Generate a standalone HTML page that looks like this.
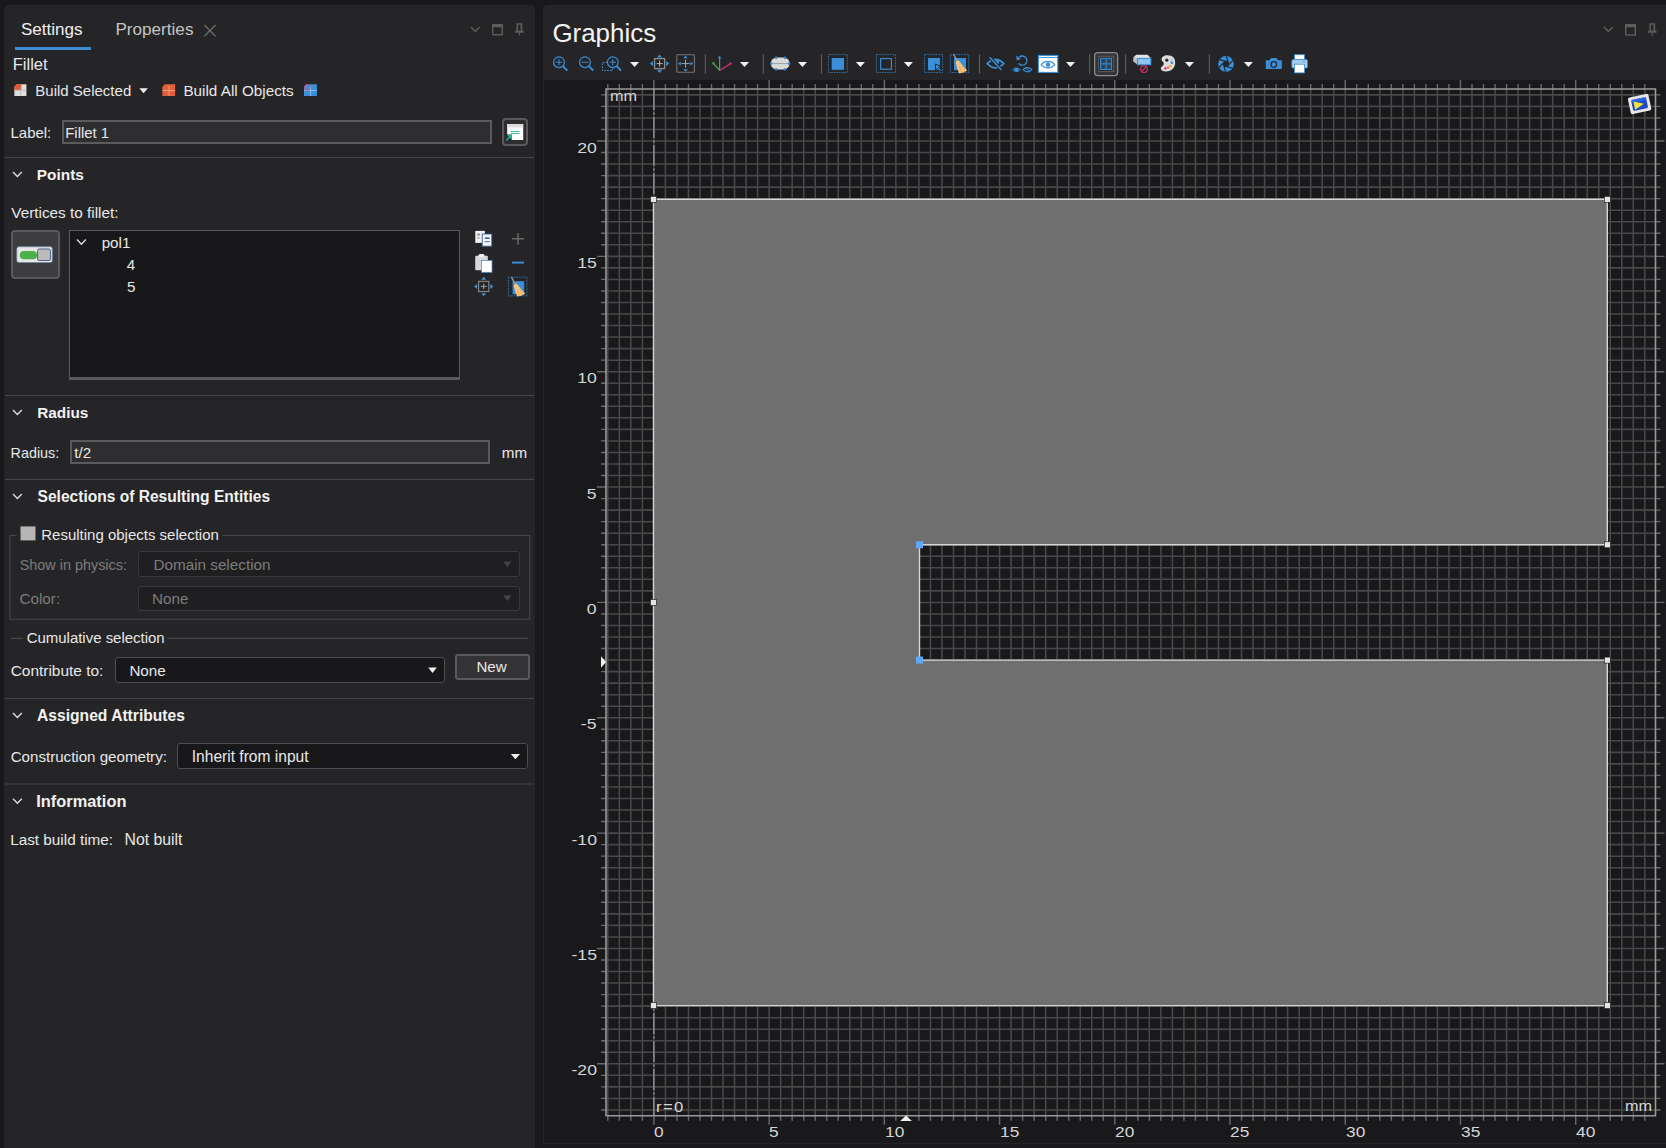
<!DOCTYPE html>
<html><head><meta charset="utf-8"><style>
html,body{margin:0;padding:0;width:1666px;height:1148px;overflow:hidden;background:#19191b;font-family:"Liberation Sans", sans-serif;}
.t{position:absolute;white-space:nowrap;}
.al{position:absolute;white-space:nowrap;font-size:15.2px;line-height:15.2px;color:#d6d6d6;}
.abs{position:absolute;box-sizing:border-box;}
</style></head><body>
<div class="abs" style="left:4px;top:5px;width:531px;height:1143px;background:#252527;border-radius:5px 5px 0 0"></div>
<div class="abs" style="left:543px;top:5px;width:1123px;height:1139px;background:#252527;border-radius:5px 0 0 0"></div>
<div class="abs" style="left:544px;top:80px;width:1122px;height:1063px;background:#19191b"></div>
<svg class="abs" style="left:0;top:0" width="1666" height="1148" viewBox="0 0 1666 1148">
<path d="M607.81 89V1115.7M619.33 89V1115.7M630.86 89V1115.7M642.38 89V1115.7M653.9 89V1115.7M665.42 89V1115.7M676.94 89V1115.7M688.47 89V1115.7M699.99 89V1115.7M711.51 89V1115.7M723.03 89V1115.7M734.56 89V1115.7M746.08 89V1115.7M757.6 89V1115.7M769.12 89V1115.7M780.65 89V1115.7M792.17 89V1115.7M803.69 89V1115.7M815.21 89V1115.7M826.74 89V1115.7M838.26 89V1115.7M849.78 89V1115.7M861.31 89V1115.7M872.83 89V1115.7M884.35 89V1115.7M895.87 89V1115.7M907.39 89V1115.7M918.92 89V1115.7M930.44 89V1115.7M941.96 89V1115.7M953.49 89V1115.7M965.01 89V1115.7M976.53 89V1115.7M988.05 89V1115.7M999.58 89V1115.7M1011.1 89V1115.7M1022.62 89V1115.7M1034.14 89V1115.7M1045.66 89V1115.7M1057.19 89V1115.7M1068.71 89V1115.7M1080.23 89V1115.7M1091.76 89V1115.7M1103.28 89V1115.7M1114.8 89V1115.7M1126.32 89V1115.7M1137.85 89V1115.7M1149.37 89V1115.7M1160.89 89V1115.7M1172.41 89V1115.7M1183.93 89V1115.7M1195.46 89V1115.7M1206.98 89V1115.7M1218.5 89V1115.7M1230.03 89V1115.7M1241.55 89V1115.7M1253.07 89V1115.7M1264.59 89V1115.7M1276.12 89V1115.7M1287.64 89V1115.7M1299.16 89V1115.7M1310.68 89V1115.7M1322.2 89V1115.7M1333.73 89V1115.7M1345.25 89V1115.7M1356.77 89V1115.7M1368.3 89V1115.7M1379.82 89V1115.7M1391.34 89V1115.7M1402.86 89V1115.7M1414.38 89V1115.7M1425.91 89V1115.7M1437.43 89V1115.7M1448.95 89V1115.7M1460.47 89V1115.7M1472 89V1115.7M1483.52 89V1115.7M1495.04 89V1115.7M1506.57 89V1115.7M1518.09 89V1115.7M1529.61 89V1115.7M1541.13 89V1115.7M1552.66 89V1115.7M1564.18 89V1115.7M1575.7 89V1115.7M1587.22 89V1115.7M1598.74 89V1115.7M1610.27 89V1115.7M1621.79 89V1115.7M1633.31 89V1115.7M1644.84 89V1115.7M606 94.86H1655.5M606 106.39H1655.5M606 117.93H1655.5M606 129.46H1655.5M606 141H1655.5M606 152.53H1655.5M606 164.07H1655.5M606 175.6H1655.5M606 187.14H1655.5M606 198.67H1655.5M606 210.21H1655.5M606 221.74H1655.5M606 233.28H1655.5M606 244.81H1655.5M606 256.35H1655.5M606 267.88H1655.5M606 279.42H1655.5M606 290.95H1655.5M606 302.49H1655.5M606 314.02H1655.5M606 325.56H1655.5M606 337.09H1655.5M606 348.63H1655.5M606 360.16H1655.5M606 371.7H1655.5M606 383.24H1655.5M606 394.77H1655.5M606 406.3H1655.5M606 417.84H1655.5M606 429.38H1655.5M606 440.91H1655.5M606 452.44H1655.5M606 463.98H1655.5M606 475.51H1655.5M606 487.05H1655.5M606 498.58H1655.5M606 510.12H1655.5M606 521.65H1655.5M606 533.19H1655.5M606 544.73H1655.5M606 556.26H1655.5M606 567.79H1655.5M606 579.33H1655.5M606 590.87H1655.5M606 602.4H1655.5M606 613.93H1655.5M606 625.47H1655.5M606 637H1655.5M606 648.54H1655.5M606 660.07H1655.5M606 671.61H1655.5M606 683.14H1655.5M606 694.68H1655.5M606 706.21H1655.5M606 717.75H1655.5M606 729.28H1655.5M606 740.82H1655.5M606 752.36H1655.5M606 763.89H1655.5M606 775.42H1655.5M606 786.96H1655.5M606 798.5H1655.5M606 810.03H1655.5M606 821.56H1655.5M606 833.1H1655.5M606 844.63H1655.5M606 856.17H1655.5M606 867.7H1655.5M606 879.24H1655.5M606 890.77H1655.5M606 902.31H1655.5M606 913.85H1655.5M606 925.38H1655.5M606 936.91H1655.5M606 948.45H1655.5M606 959.98H1655.5M606 971.52H1655.5M606 983.06H1655.5M606 994.59H1655.5M606 1006.12H1655.5M606 1017.66H1655.5M606 1029.19H1655.5M606 1040.73H1655.5M606 1052.26H1655.5M606 1063.8H1655.5M606 1075.34H1655.5M606 1086.87H1655.5M606 1098.4H1655.5M606 1109.94H1655.5" stroke="#48484a" stroke-width="1.55" fill="none"/>
<path d="M607.81 84V89M607.81 1115.7V1120.7M619.33 84V89M619.33 1115.7V1120.7M630.86 84V89M630.86 1115.7V1120.7M642.38 84V89M642.38 1115.7V1120.7M653.9 80V89M653.9 1115.7V1124.7M665.42 84V89M665.42 1115.7V1120.7M676.94 84V89M676.94 1115.7V1120.7M688.47 84V89M688.47 1115.7V1120.7M699.99 84V89M699.99 1115.7V1120.7M711.51 84V89M711.51 1115.7V1120.7M723.03 84V89M723.03 1115.7V1120.7M734.56 84V89M734.56 1115.7V1120.7M746.08 84V89M746.08 1115.7V1120.7M757.6 84V89M757.6 1115.7V1120.7M769.12 80V89M769.12 1115.7V1124.7M780.65 84V89M780.65 1115.7V1120.7M792.17 84V89M792.17 1115.7V1120.7M803.69 84V89M803.69 1115.7V1120.7M815.21 84V89M815.21 1115.7V1120.7M826.74 84V89M826.74 1115.7V1120.7M838.26 84V89M838.26 1115.7V1120.7M849.78 84V89M849.78 1115.7V1120.7M861.31 84V89M861.31 1115.7V1120.7M872.83 84V89M872.83 1115.7V1120.7M884.35 80V89M884.35 1115.7V1124.7M895.87 84V89M895.87 1115.7V1120.7M907.39 84V89M907.39 1115.7V1120.7M918.92 84V89M918.92 1115.7V1120.7M930.44 84V89M930.44 1115.7V1120.7M941.96 84V89M941.96 1115.7V1120.7M953.49 84V89M953.49 1115.7V1120.7M965.01 84V89M965.01 1115.7V1120.7M976.53 84V89M976.53 1115.7V1120.7M988.05 84V89M988.05 1115.7V1120.7M999.58 80V89M999.58 1115.7V1124.7M1011.1 84V89M1011.1 1115.7V1120.7M1022.62 84V89M1022.62 1115.7V1120.7M1034.14 84V89M1034.14 1115.7V1120.7M1045.66 84V89M1045.66 1115.7V1120.7M1057.19 84V89M1057.19 1115.7V1120.7M1068.71 84V89M1068.71 1115.7V1120.7M1080.23 84V89M1080.23 1115.7V1120.7M1091.76 84V89M1091.76 1115.7V1120.7M1103.28 84V89M1103.28 1115.7V1120.7M1114.8 80V89M1114.8 1115.7V1124.7M1126.32 84V89M1126.32 1115.7V1120.7M1137.85 84V89M1137.85 1115.7V1120.7M1149.37 84V89M1149.37 1115.7V1120.7M1160.89 84V89M1160.89 1115.7V1120.7M1172.41 84V89M1172.41 1115.7V1120.7M1183.93 84V89M1183.93 1115.7V1120.7M1195.46 84V89M1195.46 1115.7V1120.7M1206.98 84V89M1206.98 1115.7V1120.7M1218.5 84V89M1218.5 1115.7V1120.7M1230.03 80V89M1230.03 1115.7V1124.7M1241.55 84V89M1241.55 1115.7V1120.7M1253.07 84V89M1253.07 1115.7V1120.7M1264.59 84V89M1264.59 1115.7V1120.7M1276.12 84V89M1276.12 1115.7V1120.7M1287.64 84V89M1287.64 1115.7V1120.7M1299.16 84V89M1299.16 1115.7V1120.7M1310.68 84V89M1310.68 1115.7V1120.7M1322.2 84V89M1322.2 1115.7V1120.7M1333.73 84V89M1333.73 1115.7V1120.7M1345.25 80V89M1345.25 1115.7V1124.7M1356.77 84V89M1356.77 1115.7V1120.7M1368.3 84V89M1368.3 1115.7V1120.7M1379.82 84V89M1379.82 1115.7V1120.7M1391.34 84V89M1391.34 1115.7V1120.7M1402.86 84V89M1402.86 1115.7V1120.7M1414.38 84V89M1414.38 1115.7V1120.7M1425.91 84V89M1425.91 1115.7V1120.7M1437.43 84V89M1437.43 1115.7V1120.7M1448.95 84V89M1448.95 1115.7V1120.7M1460.47 80V89M1460.47 1115.7V1124.7M1472 84V89M1472 1115.7V1120.7M1483.52 84V89M1483.52 1115.7V1120.7M1495.04 84V89M1495.04 1115.7V1120.7M1506.57 84V89M1506.57 1115.7V1120.7M1518.09 84V89M1518.09 1115.7V1120.7M1529.61 84V89M1529.61 1115.7V1120.7M1541.13 84V89M1541.13 1115.7V1120.7M1552.66 84V89M1552.66 1115.7V1120.7M1564.18 84V89M1564.18 1115.7V1120.7M1575.7 80V89M1575.7 1115.7V1124.7M1587.22 84V89M1587.22 1115.7V1120.7M1598.74 84V89M1598.74 1115.7V1120.7M1610.27 84V89M1610.27 1115.7V1120.7M1621.79 84V89M1621.79 1115.7V1120.7M1633.31 84V89M1633.31 1115.7V1120.7M1644.84 84V89M1644.84 1115.7V1120.7M601 94.86H606M1655.5 94.86H1660.5M601 106.39H606M1655.5 106.39H1660.5M601 117.93H606M1655.5 117.93H1660.5M601 129.46H606M1655.5 129.46H1660.5M597 141H606M1655.5 141H1664.5M601 152.53H606M1655.5 152.53H1660.5M601 164.07H606M1655.5 164.07H1660.5M601 175.6H606M1655.5 175.6H1660.5M601 187.14H606M1655.5 187.14H1660.5M601 198.67H606M1655.5 198.67H1660.5M601 210.21H606M1655.5 210.21H1660.5M601 221.74H606M1655.5 221.74H1660.5M601 233.28H606M1655.5 233.28H1660.5M601 244.81H606M1655.5 244.81H1660.5M597 256.35H606M1655.5 256.35H1664.5M601 267.88H606M1655.5 267.88H1660.5M601 279.42H606M1655.5 279.42H1660.5M601 290.95H606M1655.5 290.95H1660.5M601 302.49H606M1655.5 302.49H1660.5M601 314.02H606M1655.5 314.02H1660.5M601 325.56H606M1655.5 325.56H1660.5M601 337.09H606M1655.5 337.09H1660.5M601 348.63H606M1655.5 348.63H1660.5M601 360.16H606M1655.5 360.16H1660.5M597 371.7H606M1655.5 371.7H1664.5M601 383.24H606M1655.5 383.24H1660.5M601 394.77H606M1655.5 394.77H1660.5M601 406.3H606M1655.5 406.3H1660.5M601 417.84H606M1655.5 417.84H1660.5M601 429.38H606M1655.5 429.38H1660.5M601 440.91H606M1655.5 440.91H1660.5M601 452.44H606M1655.5 452.44H1660.5M601 463.98H606M1655.5 463.98H1660.5M601 475.51H606M1655.5 475.51H1660.5M597 487.05H606M1655.5 487.05H1664.5M601 498.58H606M1655.5 498.58H1660.5M601 510.12H606M1655.5 510.12H1660.5M601 521.65H606M1655.5 521.65H1660.5M601 533.19H606M1655.5 533.19H1660.5M601 544.73H606M1655.5 544.73H1660.5M601 556.26H606M1655.5 556.26H1660.5M601 567.79H606M1655.5 567.79H1660.5M601 579.33H606M1655.5 579.33H1660.5M601 590.87H606M1655.5 590.87H1660.5M597 602.4H606M1655.5 602.4H1664.5M601 613.93H606M1655.5 613.93H1660.5M601 625.47H606M1655.5 625.47H1660.5M601 637H606M1655.5 637H1660.5M601 648.54H606M1655.5 648.54H1660.5M601 660.07H606M1655.5 660.07H1660.5M601 671.61H606M1655.5 671.61H1660.5M601 683.14H606M1655.5 683.14H1660.5M601 694.68H606M1655.5 694.68H1660.5M601 706.21H606M1655.5 706.21H1660.5M597 717.75H606M1655.5 717.75H1664.5M601 729.28H606M1655.5 729.28H1660.5M601 740.82H606M1655.5 740.82H1660.5M601 752.36H606M1655.5 752.36H1660.5M601 763.89H606M1655.5 763.89H1660.5M601 775.42H606M1655.5 775.42H1660.5M601 786.96H606M1655.5 786.96H1660.5M601 798.5H606M1655.5 798.5H1660.5M601 810.03H606M1655.5 810.03H1660.5M601 821.56H606M1655.5 821.56H1660.5M597 833.1H606M1655.5 833.1H1664.5M601 844.63H606M1655.5 844.63H1660.5M601 856.17H606M1655.5 856.17H1660.5M601 867.7H606M1655.5 867.7H1660.5M601 879.24H606M1655.5 879.24H1660.5M601 890.77H606M1655.5 890.77H1660.5M601 902.31H606M1655.5 902.31H1660.5M601 913.85H606M1655.5 913.85H1660.5M601 925.38H606M1655.5 925.38H1660.5M601 936.91H606M1655.5 936.91H1660.5M597 948.45H606M1655.5 948.45H1664.5M601 959.98H606M1655.5 959.98H1660.5M601 971.52H606M1655.5 971.52H1660.5M601 983.06H606M1655.5 983.06H1660.5M601 994.59H606M1655.5 994.59H1660.5M601 1006.12H606M1655.5 1006.12H1660.5M601 1017.66H606M1655.5 1017.66H1660.5M601 1029.19H606M1655.5 1029.19H1660.5M601 1040.73H606M1655.5 1040.73H1660.5M601 1052.26H606M1655.5 1052.26H1660.5M597 1063.8H606M1655.5 1063.8H1664.5M601 1075.34H606M1655.5 1075.34H1660.5M601 1086.87H606M1655.5 1086.87H1660.5M601 1098.4H606M1655.5 1098.4H1660.5M601 1109.94H606M1655.5 1109.94H1660.5" stroke="#6a6a6c" stroke-width="1.4" fill="none"/>
<path d="M653.9 89V1115.7" stroke="#8e8e90" stroke-width="1.5" fill="none" stroke-dasharray="21 2.5 2 2.5"/>
<path d="M606 1115.7V89H1655.5V1115.7Z" stroke="#9a9a9c" stroke-width="1.6" fill="none"/>
<path d="M653.5 199.3H1607.3V544.8H919.5V660.1H1607.3V1005.6H653.5Z" fill="#6f6f6f" stroke="#d6d6d6" stroke-width="1.4"/>
<rect x="650.5" y="196.3" width="6" height="6" fill="#e4e4e4" stroke="#111" stroke-width="0.6"/>
<rect x="1604.3" y="196.3" width="6" height="6" fill="#e4e4e4" stroke="#111" stroke-width="0.6"/>
<rect x="1604.3" y="541.8" width="6" height="6" fill="#e4e4e4" stroke="#111" stroke-width="0.6"/>
<rect x="1604.3" y="657.1" width="6" height="6" fill="#e4e4e4" stroke="#111" stroke-width="0.6"/>
<rect x="1604.3" y="1002.6" width="6" height="6" fill="#e4e4e4" stroke="#111" stroke-width="0.6"/>
<rect x="650.5" y="1002.6" width="6" height="6" fill="#e4e4e4" stroke="#111" stroke-width="0.6"/>
<rect x="650.5" y="599.5" width="6" height="6" fill="#e4e4e4" stroke="#111" stroke-width="0.6"/>
<rect x="916" y="541.3" width="7" height="7" fill="#62a8fa"/>
<rect x="916" y="656.6" width="7" height="7" fill="#62a8fa"/>
<path d="M601 656.3L606 662L601 667.8Z" fill="#f0f0f0"/>
<path d="M900.2 1121L906 1115.6L911.9 1121Z" fill="#f0f0f0"/>
</svg>
<div class="al" style="left:654.2px;top:1124.1px;transform-origin:0 0;transform:scaleX(1.14)">0</div>
<div class="al" style="left:769.4px;top:1124.1px;transform-origin:0 0;transform:scaleX(1.14)">5</div>
<div class="al" style="left:884.6px;top:1124.1px;transform-origin:0 0;transform:scaleX(1.14)">10</div>
<div class="al" style="left:999.9px;top:1124.1px;transform-origin:0 0;transform:scaleX(1.14)">15</div>
<div class="al" style="left:1115.1px;top:1124.1px;transform-origin:0 0;transform:scaleX(1.14)">20</div>
<div class="al" style="left:1230.3px;top:1124.1px;transform-origin:0 0;transform:scaleX(1.14)">25</div>
<div class="al" style="left:1345.5px;top:1124.1px;transform-origin:0 0;transform:scaleX(1.14)">30</div>
<div class="al" style="left:1460.8px;top:1124.1px;transform-origin:0 0;transform:scaleX(1.14)">35</div>
<div class="al" style="left:1576.0px;top:1124.1px;transform-origin:0 0;transform:scaleX(1.14)">40</div>
<div class="al" style="right:1069.2px;top:139.5px;text-align:right;transform-origin:100% 0;transform:scaleX(1.16)">20</div>
<div class="al" style="right:1069.2px;top:254.9px;text-align:right;transform-origin:100% 0;transform:scaleX(1.16)">15</div>
<div class="al" style="right:1069.2px;top:370.2px;text-align:right;transform-origin:100% 0;transform:scaleX(1.16)">10</div>
<div class="al" style="right:1069.2px;top:485.6px;text-align:right;transform-origin:100% 0;transform:scaleX(1.16)">5</div>
<div class="al" style="right:1069.2px;top:600.9px;text-align:right;transform-origin:100% 0;transform:scaleX(1.16)">0</div>
<div class="al" style="right:1069.2px;top:716.3px;text-align:right;transform-origin:100% 0;transform:scaleX(1.16)">-5</div>
<div class="al" style="right:1069.2px;top:831.6px;text-align:right;transform-origin:100% 0;transform:scaleX(1.16)">-10</div>
<div class="al" style="right:1069.2px;top:947.0px;text-align:right;transform-origin:100% 0;transform:scaleX(1.16)">-15</div>
<div class="al" style="right:1069.2px;top:1062.3px;text-align:right;transform-origin:100% 0;transform:scaleX(1.16)">-20</div>
<div class="al" style="left:610.0px;top:88.3px;transform-origin:0 0;transform:scaleX(1.07)">mm</div>
<div class="al" style="left:1624.9px;top:1098.3px;transform-origin:0 0;transform:scaleX(1.07)">mm</div>
<div class="al" style="left:656.0px;top:1099.3px;transform-origin:0 0;transform:scaleX(1.1);letter-spacing:1.2px">r=0</div>
<!-- inputs -->
<div class="abs" style="left:62px;top:120px;width:430px;height:24px;border:2px solid #5b5b5d;background:#2e2e30"></div>
<div class="abs" style="left:502px;top:118px;width:25.6px;height:28px;border:2px solid #5a5a5c;border-radius:4px;background:#2d2d2f"></div>
<div class="abs" style="left:10.5px;top:230.4px;width:49px;height:49px;border:2px solid #5a5a5c;border-radius:4px;background:#3d3d3f"></div>
<div class="abs" style="left:69px;top:230px;width:391px;height:150px;border:1px solid #5a5a5c;border-bottom:3px solid #5a5a5c;background:#18181a"></div>
<div class="abs" style="left:69.8px;top:440.3px;width:420.2px;height:23.7px;border:2px solid #5b5b5d;background:#2e2e30"></div>
<div class="abs" style="left:138.2px;top:551.4px;width:381.8px;height:25.2px;border:1px solid #3a3a3c;border-radius:3px;background:#1f1f21"></div>
<div class="abs" style="left:138.2px;top:585.5px;width:381.8px;height:25.1px;border:1px solid #3a3a3c;border-radius:3px;background:#1f1f21"></div>
<div class="abs" style="left:114.6px;top:657.3px;width:330.4px;height:25.4px;border:1px solid #4e4e50;border-radius:3px;background:#18181a"></div>
<div class="abs" style="left:455.2px;top:654px;width:74.6px;height:26px;border:2px solid #5a5a5c;border-radius:3px;background:#333335"></div>
<div class="abs" style="left:177.2px;top:743.3px;width:350.5px;height:25.4px;border:1px solid #4e4e50;border-radius:3px;background:#18181a"></div>

<!-- tab underline -->
<div class="abs" style="left:15px;top:47px;width:76px;height:3px;background:#3b8ed6"></div>
<!-- header icons left panel -->
<svg class="abs" style="left:0;top:0" width="540" height="900" viewBox="0 0 540 900">
  <!-- close X -->
  <path d="M204.3 25L215.5 36.3M215.5 25L204.3 36.3" stroke="#6c6c6c" stroke-width="1.3"/>
  <!-- chevron -->
  <path d="M471 27L475.3 31.5L479.6 27" stroke="#5e5e5e" stroke-width="1.4" fill="none"/>
  <!-- window -->
  <rect x="492.8" y="25" width="9.4" height="9.7" stroke="#5e5e5e" stroke-width="1.4" fill="none"/>
  <rect x="492.1" y="24.2" width="10.8" height="3" fill="#5e5e5e"/>
  <!-- pin -->
  <path d="M516.5 23.2H522.3V30.5L523.7 31.3V32.7H515.1V31.3L516.5 30.5Z" fill="#5e5e5e"/>
  <path d="M519.4 32.5V35.5" stroke="#5e5e5e" stroke-width="1.2"/>
  <rect x="518" y="24.6" width="2.6" height="6" fill="#252527"/>

  <!-- build selected icon -->
  <g transform="translate(14.4,84.2)">
    <path d="M0 2.5L2.5 0H12L12 11.8H0Z" fill="#dedede"/>
    <path d="M0 2.5L2.5 0H7L7 6H0Z" fill="#e2582f"/>
    <path d="M0 6H12M6.5 2.5V11.8" stroke="#b8b8b8" stroke-width="0.8"/>
  </g>
  <path d="M139.3 88.2H147.9L143.6 93.2Z" fill="#f0f0f0"/>
  <!-- build all -->
  <g transform="translate(162.4,84.2)">
    <path d="M0 2.5L2.5 0H12.7L12.7 11.9H0Z" fill="#e0603a"/>
    <path d="M0 6.3H12.7M6.6 2V11.9" stroke="#f3a184" stroke-width="0.9"/>
  </g>
  <g transform="translate(304,84.2)">
    <path d="M0 2.5L2.5 0H12.9L12.9 11.9H0Z" fill="#3a8fd8"/>
    <path d="M0 6.3H12.9M6.6 2V11.9" stroke="#8cc2f0" stroke-width="0.9"/>
    <circle cx="3.2" cy="3.4" r="2.9" stroke="#e04c7a" stroke-width="0.9" fill="none"/>
  </g>

  <!-- section chevrons -->
  <path d="M13 172L17.4 176.6L21.8 172" stroke="#dcdcdc" stroke-width="1.4" fill="none"/>
  <path d="M13 410L17.4 414.6L21.8 410" stroke="#dcdcdc" stroke-width="1.4" fill="none"/>
  <path d="M13 494L17.4 498.6L21.8 494" stroke="#dcdcdc" stroke-width="1.4" fill="none"/>
  <path d="M13 713L17.4 717.6L21.8 713" stroke="#dcdcdc" stroke-width="1.4" fill="none"/>
  <path d="M13 798.7L17.4 803.3L21.8 798.7" stroke="#dcdcdc" stroke-width="1.4" fill="none"/>
  <!-- list chevron -->
  <path d="M77 239.6L81.4 244.3L85.8 239.6" stroke="#dcdcdc" stroke-width="1.4" fill="none"/>

  <!-- separators -->
  <path d="M5 157.5H534M5 395.5H534M5 479.3H534M5 698.5H534M5 784H534" stroke="#454547" stroke-width="1.2"/>

  <!-- group box -->
  <path d="M16.8 535.5H10V619.2H529.8V535.5H222.2" stroke="#474749" stroke-width="1.1" fill="none"/>
  <!-- cumulative line -->
  <path d="M11 638.4H22.8M167.1 638.4H528.3" stroke="#474749" stroke-width="1.1"/>
  <!-- disabled dropdown arrows -->
  <path d="M503.2 561.5H511.6L507.4 567Z" fill="#444446"/>
  <path d="M503.2 595.6H511.6L507.4 601.1Z" fill="#444446"/>
  <!-- contribute arrow -->
  <path d="M428.2 667.4H436.8L432.5 672.9Z" fill="#f0f0f0"/>
  <!-- construction arrow -->
  <path d="M510.8 754H520L515.4 759.2Z" fill="#f0f0f0"/>

  <!-- plus / minus -->
  <path d="M512.1 238.8H524M518.05 232.9V244.7" stroke="#686868" stroke-width="1.5"/>
  <path d="M512.1 262.6H524" stroke="#3a8fd8" stroke-width="2"/>
  <!-- copy icon -->
  <g>
    <rect x="475.3" y="230.9" width="9.6" height="12" fill="#f2f2f2"/>
    <rect x="477" y="233.5" width="3" height="2.2" fill="#9a9a9a"/>
    <rect x="477" y="237.4" width="3" height="1" fill="#9a9a9a"/>
    <rect x="482.2" y="234" width="9.6" height="12.2" fill="#f6f6f6" stroke="#2f5f9a" stroke-width="0.9"/>
    <rect x="484.8" y="237.3" width="4.8" height="1.6" fill="#35659e"/>
    <rect x="484.8" y="241.2" width="4.8" height="1" fill="#35659e"/>
  </g>
  <!-- paste icon -->
  <g>
    <rect x="475.2" y="255.7" width="12.6" height="14.5" rx="1" fill="#d8d8da"/>
    <rect x="478.5" y="254.1" width="6" height="3" rx="1.5" fill="#f0f0f0"/>
    <rect x="481.4" y="260.5" width="10.6" height="11.8" fill="#ffffff" stroke="#4f8fd0" stroke-width="0.8"/>
  </g>
  <!-- zoom to selection icon -->
  <g>
    <rect x="478.6" y="281.3" width="10.2" height="10.2" stroke="#8a8a8a" stroke-width="1.1" fill="none"/>
    <path d="M483.7 283.5V289.3M480.8 286.4H486.6" stroke="#b0b0b0" stroke-width="0.9"/>
    <path d="M481.2 279.8L483.7 276.8L486.2 279.8Z" fill="#3a8fd8"/>
    <path d="M481.2 293.2L483.7 296.3L486.2 293.2Z" fill="#3a8fd8"/>
    <path d="M477.1 283.9L474.1 286.4L477.1 288.9Z" fill="#3a8fd8"/>
    <path d="M490.3 283.9L493.3 286.4L490.3 288.9Z" fill="#3a8fd8"/>
  </g>
  <!-- clear selection icon -->
  <g>
    <rect x="508.4" y="277.2" width="18.5" height="18.7" stroke="#3278b8" stroke-width="0.9" stroke-dasharray="1.7 1" fill="none"/>
    <path d="M512.6 281.2H524.2V294.3H512.6Z" fill="#3a8fd8"/>
    <path d="M511.4 277L515.6 284.8" stroke="#9a9a9a" stroke-width="1.4"/>
    <path d="M513.6 285L516.6 283.4L521.4 289.6L525.2 293.6L521.6 295.8L517.2 296.6L515.2 291.8Z" fill="#f6c27c"/>
    <path d="M517.5 289.2L519.2 295.8M519.8 288.4L522.6 294.8" stroke="#d9a05c" stroke-width="0.6"/>
  </g>
  <!-- toggle icon -->
  <g>
    <rect x="16.8" y="246.7" width="35.5" height="15.8" rx="2" fill="#e6e6e6" stroke="#6d86a6" stroke-width="0.8"/>
    <rect x="19.8" y="251" width="17.2" height="8.2" rx="4" fill="#4eb04a"/>
    <rect x="37.6" y="249" width="12.8" height="11.5" rx="1.5" fill="#bcbcbc" stroke="#4a6488" stroke-width="1"/>
  </g>
  <!-- label button doc icon -->
  <g>
    <rect x="507.2" y="124" width="16" height="16" fill="#ffffff"/>
    <rect x="507.2" y="124" width="16" height="3.4" fill="#dcdcdc"/>
    <path d="M510.8 131.5H519.4M510.8 133.5H519.4" stroke="#25b08c" stroke-width="0.9"/>
    <rect x="505.8" y="134.5" width="6" height="6" fill="#2b2b2d"/>
    <path d="M506.2 140.5L510.6 136.2M507.8 135.8H511.1V139" stroke="#1fb596" stroke-width="1.5" fill="none"/>
  </g>
  <!-- checkbox -->
  <rect x="20.5" y="526.4" width="15" height="14" fill="#b6b6b6"/>
</svg>

<svg class="abs" style="left:540px;top:0" width="1126" height="125" viewBox="540 0 1126 125">
  <defs>
    <g id="dd"><path d="M0 0H9L4.5 5.2Z" fill="#f2f2f2"/></g>
  </defs>
  <!-- panel header icons -->
  <path d="M1604 27L1608.4 31.6L1612.8 27" stroke="#5e5e5e" stroke-width="1.4" fill="none"/>
  <rect x="1625.7" y="25" width="9.6" height="10" stroke="#5e5e5e" stroke-width="1.4" fill="none"/>
  <rect x="1625" y="24.2" width="11" height="3" fill="#5e5e5e"/>
  <path d="M1649.4 23.2H1655.2V30.5L1656.6 31.3V32.7H1648V31.3L1649.4 30.5Z" fill="#5e5e5e"/>
  <path d="M1652.3 32.5V35.7" stroke="#5e5e5e" stroke-width="1.2"/>
  <rect x="1650.9" y="24.6" width="2.6" height="6" fill="#252527"/>

  <!-- zoom in -->
  <g stroke="#3a8fd8" fill="none">
    <circle cx="559" cy="62.2" r="5.4" stroke-width="1.2"/>
    <path d="M555.8 62.2H562.2M559 59V65.4" stroke-width="1"/>
    <path d="M562.9 66.1L567.3 70.6" stroke-width="2"/>
    <circle cx="585" cy="62.2" r="5.4" stroke-width="1.2"/>
    <path d="M581.8 62.2H588.2" stroke-width="1"/>
    <path d="M588.9 66.1L593.3 70.6" stroke-width="2"/>
    <path d="M607.6 62.4H602.4V70.6H612.6V67.6" stroke-width="1" stroke-dasharray="1.8 1.2"/>
    <circle cx="612.8" cy="62.2" r="5.4" stroke-width="1.2"/>
    <path d="M609.6 62.2H616M612.8 59V65.4" stroke-width="1"/>
    <path d="M616.7 66.1L621.1 70.6" stroke-width="2"/>
  </g>
  <use href="#dd" x="630.1" y="61.9"/>
  <!-- zoom extents -->
  <rect x="654.6" y="58.6" width="10" height="10" stroke="#8c8c8c" stroke-width="1.3" fill="none"/>
  <path d="M659.6 60.6V66.6M656.6 63.6H662.6" stroke="#b4b4b4" stroke-width="1"/>
  <path d="M657 57.5L659.6 54.4L662.2 57.5ZM657 69.8L659.6 72.9L662.2 69.8ZM653 61L649.9 63.6L653 66.2ZM666.2 61L669.3 63.6L666.2 66.2Z" fill="#3a8fd8"/>
  <!-- zoom selected -->
  <rect x="676.8" y="54.7" width="17.6" height="17.6" rx="0.8" stroke="#747476" stroke-width="1.1" fill="none"/>
  <path d="M685.6 59.6V67.6M681.6 63.6H689.6" stroke="#a8a8a8" stroke-width="1"/>
  <path d="M683.4 58.2L685.6 55.6L687.8 58.2ZM683.4 69.2L685.6 71.8L687.8 69.2ZM680.8 61.4L678.2 63.6L680.8 65.8ZM690.4 61.4L693 63.6L690.4 65.8Z" fill="#3a8fd8"/>
  <!-- separators -->
  <path d="M705.4 54.3V73.8M763.4 54.3V73.8M821.5 54.3V73.8M979.5 54.3V73.8M1089.7 54.3V73.8M1125.6 54.3V73.8M1209.4 54.3V73.8" stroke="#5c5c5e" stroke-width="1.1"/>
  <!-- axes icon -->
  <path d="M719.6 70.5V57.5" stroke="#3b8fd8" stroke-width="1.2"/>
  <path d="M717.8 58.3L719.6 55.6L721.4 58.3Z" fill="#3b8fd8"/>
  <path d="M719.6 70.5L713.5 63.5" stroke="#47a447" stroke-width="1.2"/>
  <path d="M711.8 62L715.3 62.7L713 64.9Z" fill="#47a447"/>
  <path d="M719.6 70.5L730.5 63.8" stroke="#d6336c" stroke-width="1.2"/>
  <path d="M732.2 62.9L728.7 62.6L730.4 65.5Z" fill="#d6336c"/>
  <use href="#dd" x="740" y="61.9"/>
  <!-- pill -->
  <rect x="770.8" y="57.6" width="18.8" height="12" rx="6" fill="#dadada"/>
  <path d="M771.5 63.6H789" stroke="#9a9a9a" stroke-width="0.9"/>
  <g fill="#3a8fd8"><circle cx="776" cy="57.9" r="1.3"/><circle cx="784.9" cy="57.9" r="1.3"/><circle cx="771.3" cy="63.6" r="1.3"/><circle cx="789" cy="63.6" r="1.3"/><circle cx="776" cy="69.3" r="1.3"/><circle cx="784.9" cy="69.3" r="1.3"/></g>
  <use href="#dd" x="798" y="61.9"/>
  <!-- select domains -->
  <rect x="828.4" y="54.6" width="18.8" height="17.9" stroke="#3278b8" stroke-width="0.9" stroke-dasharray="1.7 1" fill="none"/>
  <rect x="831.7" y="58" width="12.3" height="11.8" fill="#3a8fd8"/>
  <use href="#dd" x="855.9" y="61.9"/>
  <rect x="876.4" y="54.6" width="19" height="17.9" stroke="#3278b8" stroke-width="0.9" stroke-dasharray="1.7 1" fill="none"/>
  <rect x="880.6" y="58.6" width="10.8" height="10.6" stroke="#3a8fd8" stroke-width="1.1" fill="none"/>
  <use href="#dd" x="903.9" y="61.9"/>
  <rect x="924.6" y="54.6" width="18" height="17.9" stroke="#3278b8" stroke-width="0.9" stroke-dasharray="1.7 1" fill="none"/>
  <rect x="928" y="58" width="12" height="12.2" fill="#3a8fd8"/>
  <path d="M935.3 64L935.6 70.2L937.2 68.5L940 71.6L941.4 70.3L938.7 67.2L941 66.4Z" fill="#3a8fd8" stroke="#202830" stroke-width="1"/>
  <rect x="950.4" y="54.6" width="18.3" height="17.9" stroke="#3278b8" stroke-width="0.9" stroke-dasharray="1.7 1" fill="none"/>
  <rect x="954" y="58" width="12" height="12.2" fill="#3a8fd8"/>
  <path d="M953.4 54L957.6 61.6" stroke="#9a9a9a" stroke-width="1.4"/>
  <path d="M955.6 61.8L958.6 60.2L963.4 66.4L967.2 70.4L963.6 72.6L959.2 73.4L957.2 68.6Z" fill="#f6c27c"/>
  <path d="M959.5 66L961.2 72.6M961.8 65.2L964.6 71.6" stroke="#d9a05c" stroke-width="0.6"/>
  <!-- hide -->
  <path d="M987.2 63.6Q995.5 55.2 1003.8 63.6Q995.5 72 987.2 63.6Z" stroke="#3a8fd8" stroke-width="1.7" fill="none"/>
  <circle cx="996.2" cy="62.6" r="2.8" fill="#3a8fd8"/>
  <path d="M989.4 56.8L1001.8 70.4" stroke="#252527" stroke-width="3.4"/>
  <path d="M989.6 57.2L1001.5 70" stroke="#3a8fd8" stroke-width="1.5"/>
  <!-- reset hiding -->
  <path d="M1019.2 57.2A4.6 4.6 0 1 1 1018.6 63.3" stroke="#3a8fd8" stroke-width="1.3" fill="none"/>
  <path d="M1016.3 55.5L1016.6 60.2L1020.9 59.3Z" fill="#3a8fd8"/>
  <path d="M1012 69.7Q1016.5 65.2 1021 69.7Q1016.5 74.2 1012 69.7Z" fill="#3a8fd8"/>
  <path d="M1013.8 68.3V71.1M1019.2 68.3V71.1" stroke="#1c2a38" stroke-width="0.8"/>
  <path d="M1023.1 69.7Q1027.5 65.5 1031.9 69.7Q1027.5 73.9 1023.1 69.7Z" stroke="#3a8fd8" stroke-width="1.1" fill="none"/>
  <path d="M1025 67.2L1030 72.3" stroke="#3a8fd8" stroke-width="1"/>
  <!-- view window -->
  <rect x="1038.4" y="55.4" width="19.4" height="17" fill="#ffffff" stroke="#3a8fd8" stroke-width="1.1"/>
  <path d="M1038.4 57.4H1057.8" stroke="#3a8fd8" stroke-width="1"/>
  <path d="M1041.3 64.6C1044.5 60.3 1051.5 60.3 1054.7 64.6C1051.5 68.9 1044.5 68.9 1041.3 64.6Z" stroke="#3a8fd8" stroke-width="1.3" fill="none"/>
  <circle cx="1048" cy="64.6" r="2.3" fill="#3a8fd8"/>
  <use href="#dd" x="1066" y="61.9"/>
  <!-- grid toggle pressed -->
  <rect x="1094.6" y="52.6" width="23" height="23" rx="3" fill="#353537" stroke="#8a8a8c" stroke-width="1.3"/>
  <rect x="1098.6" y="56.3" width="15" height="15.3" fill="#2a2a2c" stroke="#5a5a5c" stroke-width="1"/>
  <rect x="1100.6" y="58.3" width="11" height="11.2" fill="#2c4660" stroke="#3a8fd8" stroke-width="1"/>
  <path d="M1106.1 58.3V69.5M1100.6 63.9H1111.6" stroke="#3a8fd8" stroke-width="1"/>
  <!-- suppress -->
  <path d="M1133.2 57.4L1136.2 54.8H1147.6L1151 58.3H1137.6Z" fill="#e4e4e4"/>
  <path d="M1133.2 57.4L1137.6 58.3V64.8L1133.2 61.4Z" fill="#bdbdbd"/>
  <rect x="1137.6" y="58.3" width="13.3" height="6.5" fill="#8cc4f2" stroke="#3a8fd8" stroke-width="0.9"/>
  <circle cx="1144" cy="69.1" r="3.4" stroke="#d63369" stroke-width="1.1" fill="none"/>
  <path d="M1141.6 71.5L1146.4 66.7" stroke="#d63369" stroke-width="1.1"/>
  <!-- palette -->
  <path d="M1167.5 55.3C1172.8 55.3 1175.2 58.4 1175.2 62.5C1175.2 67.4 1172 71.5 1165.8 71.5C1162.6 71.5 1160.8 70.2 1160.8 68.6C1160.8 66.5 1163.8 66.1 1163.8 63.5C1163.8 61.7 1161.6 61.3 1161.6 59.5C1161.6 57.2 1163.8 55.3 1167.5 55.3Z" fill="#dcdcdc"/>
  <circle cx="1166.8" cy="60.2" r="1.6" fill="#2a2a2a"/>
  <circle cx="1171.5" cy="59.6" r="1.1" fill="#8cc4f2"/>
  <circle cx="1171.9" cy="62.7" r="1.3" fill="#3a8fd8"/>
  <circle cx="1170.4" cy="66" r="1.2" fill="#f4a23a"/>
  <circle cx="1168" cy="67.6" r="1.2" fill="#f06a2e"/>
  <circle cx="1165.4" cy="68.4" r="1.2" fill="#e0306a"/>
  <use href="#dd" x="1184.9" y="61.9"/>
  <!-- aperture -->
  <circle cx="1226.0" cy="63.9" r="7.8" fill="#3a8fd8"/>
  <path d="M1226.75 66.70L1233.00 60.45M1223.95 65.95L1232.48 68.24M1223.20 63.15L1225.49 71.68M1225.25 61.10L1219.00 67.35M1228.05 61.85L1219.52 59.56M1228.80 64.65L1226.51 56.12" stroke="#252527" stroke-width="1.2" fill="none"/>
  <path d="M1228.80 64.65L1226.75 66.70L1223.95 65.95L1223.20 63.15L1225.25 61.10L1228.05 61.85Z" fill="#252527"/>
  <use href="#dd" x="1243.9" y="61.9"/>
  <!-- camera -->
  <path d="M1265.8 60.3H1269.5L1271 58H1276.6L1278 60.3H1281.8V69H1265.8Z" fill="#3a8fd8"/>
  <circle cx="1273.8" cy="64.5" r="3.4" fill="#252527"/>
  <circle cx="1273.8" cy="64.5" r="2.2" fill="#3a8fd8"/>
  <rect x="1267" y="59" width="1.5" height="1" fill="#252527"/>
  <!-- printer -->
  <rect x="1294.5" y="54.7" width="10" height="5" fill="#ffffff" stroke="#3a8fd8" stroke-width="0.8"/>
  <rect x="1291.8" y="59.5" width="15.7" height="8.6" rx="1.5" fill="#a9cdf0" stroke="#3a8fd8" stroke-width="0.8"/>
  <rect x="1294.5" y="64.2" width="10" height="8.7" fill="#ffffff" stroke="#3a8fd8" stroke-width="0.8"/>
  <rect x="1302.8" y="61" width="2" height="0.9" fill="#3a8fd8"/>

  <!-- view icon in canvas -->
  <g transform="translate(1639.6,104) rotate(-12)">
    <rect x="-10.5" y="-8.5" width="21" height="17" rx="2" fill="#e8e8e8"/>
    <rect x="-7.6" y="-5.6" width="15.2" height="11.2" rx="1.5" fill="#1f49c9"/>
    <path d="M-5.5 -3.8L4.2 0.6L-5.5 4.6Z" fill="#f5e63a"/>
    <rect x="-7.6" y="-5.6" width="15.2" height="2.6" fill="#3f7df0" opacity="0.6"/>
  </g>
</svg>

<div class="t" style="left:20.97px;top:20.88px;font-size:17.04px;line-height:17.04px;color:#efefef;">Settings</div>
<div class="t" style="left:115.46px;top:20.52px;font-size:17.11px;line-height:17.11px;color:#c4c4c4;">Properties</div>
<div class="t" style="left:12.71px;top:56.99px;font-size:16.55px;line-height:16.55px;color:#e8e8e8;">Fillet</div>
<div class="t" style="left:35.33px;top:83.20px;font-size:15.00px;line-height:15.00px;color:#e8e8e8;">Build Selected</div>
<div class="t" style="left:183.41px;top:82.56px;font-size:15.28px;line-height:15.28px;color:#e8e8e8;">Build All Objects</div>
<div class="t" style="left:10.53px;top:125.65px;font-size:14.94px;line-height:14.94px;color:#e8e8e8;">Label:</div>
<div class="t" style="left:65.23px;top:125.66px;font-size:14.93px;line-height:14.93px;color:#e8e8e8;">Fillet 1</div>
<div class="t" style="left:36.84px;top:166.98px;font-size:15.38px;line-height:15.38px;color:#f2f2f2;font-weight:bold;">Points</div>
<div class="t" style="left:11.30px;top:204.93px;font-size:15.32px;line-height:15.32px;color:#e8e8e8;">Vertices to fillet:</div>
<div class="t" style="left:101.65px;top:235.03px;font-size:15.20px;line-height:15.20px;color:#e8e8e8;">pol1</div>
<div class="t" style="left:126.66px;top:257.23px;font-size:15.20px;line-height:15.20px;color:#e8e8e8;">4</div>
<div class="t" style="left:127.03px;top:279.03px;font-size:15.20px;line-height:15.20px;color:#e8e8e8;">5</div>
<div class="t" style="left:37.24px;top:404.80px;font-size:15.35px;line-height:15.35px;color:#f2f2f2;font-weight:bold;">Radius</div>
<div class="t" style="left:10.58px;top:445.84px;font-size:14.37px;line-height:14.37px;color:#e8e8e8;">Radius:</div>
<div class="t" style="left:74.20px;top:445.13px;font-size:15.20px;line-height:15.20px;color:#e8e8e8;">t/2</div>
<div class="t" style="left:501.75px;top:445.03px;font-size:15.20px;line-height:15.20px;color:#e8e8e8;">mm</div>
<div class="t" style="left:37.56px;top:488.62px;font-size:15.57px;line-height:15.57px;color:#f2f2f2;font-weight:bold;">Selections of Resulting Entities</div>
<div class="t" style="left:41.23px;top:526.50px;font-size:15.00px;line-height:15.00px;color:#e8e8e8;">Resulting objects selection</div>
<div class="t" style="left:19.75px;top:558.11px;font-size:14.40px;line-height:14.40px;color:#7c7c7c;">Show in physics:</div>
<div class="t" style="left:153.41px;top:557.37px;font-size:15.27px;line-height:15.27px;color:#7c7c7c;">Domain selection</div>
<div class="t" style="left:19.48px;top:591.09px;font-size:15.26px;line-height:15.26px;color:#7c7c7c;">Color:</div>
<div class="t" style="left:152.11px;top:591.13px;font-size:15.20px;line-height:15.20px;color:#7c7c7c;">None</div>
<div class="t" style="left:26.70px;top:631.14px;font-size:14.96px;line-height:14.96px;color:#e8e8e8;">Cumulative selection</div>
<div class="t" style="left:10.68px;top:662.73px;font-size:15.44px;line-height:15.44px;color:#e8e8e8;">Contribute to:</div>
<div class="t" style="left:129.41px;top:662.93px;font-size:15.20px;line-height:15.20px;color:#e8e8e8;">None</div>
<div class="t" style="left:476.42px;top:658.98px;font-size:15.15px;line-height:15.15px;color:#e8e8e8;">New</div>
<div class="t" style="left:37.06px;top:707.77px;font-size:15.63px;line-height:15.63px;color:#f2f2f2;font-weight:bold;">Assigned Attributes</div>
<div class="t" style="left:10.69px;top:749.41px;font-size:15.11px;line-height:15.11px;color:#e8e8e8;">Construction geometry:</div>
<div class="t" style="left:191.78px;top:749.02px;font-size:15.57px;line-height:15.57px;color:#e8e8e8;">Inherit from input</div>
<div class="t" style="left:36.27px;top:792.82px;font-size:16.40px;line-height:16.40px;color:#f2f2f2;font-weight:bold;">Information</div>
<div class="t" style="left:10.20px;top:831.94px;font-size:15.31px;line-height:15.31px;color:#e8e8e8;">Last build time:</div>
<div class="t" style="left:124.47px;top:831.53px;font-size:15.80px;line-height:15.80px;color:#e8e8e8;">Not built</div>
<div class="t" style="left:552.38px;top:21.24px;font-size:25.95px;line-height:25.95px;color:#f4f4f4;">Graphics</div>
</body></html>
